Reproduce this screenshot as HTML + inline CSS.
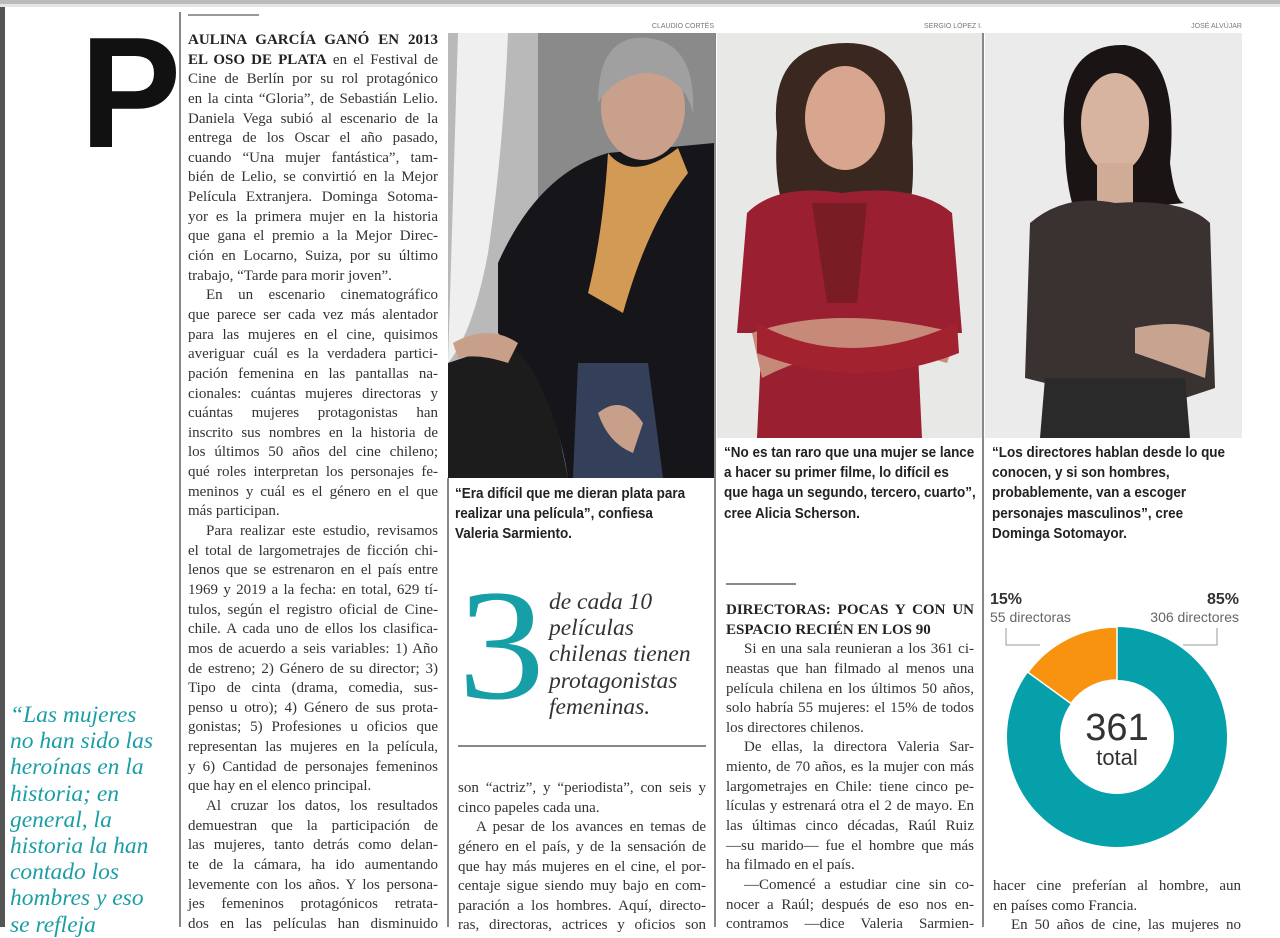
<!DOCTYPE html>
<html><head><meta charset="utf-8"><style>
*{margin:0;padding:0;box-sizing:border-box}
body{width:1280px;height:927px;overflow:hidden;background:#fff;position:relative;font-family:"Liberation Serif",serif;color:#333}
.a{position:absolute}
.col div{height:19.65px;line-height:19.65px;font-size:15px;text-align:justify;text-align-last:justify;white-space:nowrap;overflow:visible}
.col div.l{text-align-last:left}
.col div.i{padding-left:18px}
.cap{font-family:"Liberation Sans",sans-serif;font-weight:bold;font-size:14.5px;line-height:20.2px;color:#222;white-space:nowrap;transform:scaleX(0.93);transform-origin:left top}
.cr{font-family:"Liberation Sans",sans-serif;font-size:7px;color:#777;white-space:nowrap}
.vr{position:absolute;width:2px;background:#888}
.q{color:#1a9ea6;font-style:italic;font-size:23.5px;line-height:26.2px;white-space:nowrap}
</style></head><body>
<div class="a" style="left:0;top:0;width:5px;height:927px;background:#555"></div>
<div class="a" style="left:0;top:0;width:1280px;height:4px;background:#bbb"></div>
<div class="a" style="left:0;top:4px;width:1280px;height:3px;background:#e4e4e4"></div>

<div class="vr" style="left:179px;top:12px;height:915px"></div>
<div class="vr" style="left:447px;top:478px;height:449px;width:1.5px"></div>
<div class="vr" style="left:714px;top:33px;height:894px;width:1.5px"></div>
<div class="vr" style="left:982px;top:33px;height:894px;width:1.5px"></div>
<div class="a" style="left:188px;top:14px;width:71px;height:1.5px;background:#999"></div>

<div class="a" style="left:80px;top:14px;font-family:'Liberation Sans',sans-serif;font-weight:900;font-size:158px;line-height:1;color:#111;transform:scaleX(0.96);transform-origin:left top">P</div>

<div class="a col" style="left:188px;top:31px;width:250px">
<div><b style="color:#222">AULINA GARCÍA GANÓ EN 2013</b></div>
<div><b style="color:#222">EL OSO DE PLATA</b> en el Festival de</div>
<div>Cine de Berlín por su rol protagónico</div>
<div>en la cinta “Gloria”, de Sebastián Lelio.</div>
<div>Daniela Vega subió al escenario de la</div>
<div>entrega de los Oscar el año pasado,</div>
<div>cuando “Una mujer fantástica”, tam-</div>
<div>bién de Lelio, se convirtió en la Mejor</div>
<div>Película Extranjera. Dominga Sotoma-</div>
<div>yor es la primera mujer en la historia</div>
<div>que gana el premio a la Mejor Direc-</div>
<div>ción en Locarno, Suiza, por su último</div>
<div class="l">trabajo, “Tarde para morir joven”.</div>
<div class="i">En un escenario cinematográfico</div>
<div>que parece ser cada vez más alentador</div>
<div>para las mujeres en el cine, quisimos</div>
<div>averiguar cuál es la verdadera partici-</div>
<div>pación femenina en las pantallas na-</div>
<div>cionales: cuántas mujeres directoras y</div>
<div>cuántas mujeres protagonistas han</div>
<div>inscrito sus nombres en la historia de</div>
<div>los últimos 50 años del cine chileno;</div>
<div>qué roles interpretan los personajes fe-</div>
<div>meninos y cuál es el género en el que</div>
<div class="l">más participan.</div>
<div class="i">Para realizar este estudio, revisamos</div>
<div>el total de largometrajes de ficción chi-</div>
<div>lenos que se estrenaron en el país entre</div>
<div>1969 y 2019 a la fecha: en total, 629 tí-</div>
<div>tulos, según el registro oficial de Cine-</div>
<div>chile. A cada uno de ellos los clasifica-</div>
<div>mos de acuerdo a seis variables: 1) Año</div>
<div>de estreno; 2) Género de su director; 3)</div>
<div>Tipo de cinta (drama, comedia, sus-</div>
<div>penso u otro); 4) Género de sus prota-</div>
<div>gonistas; 5) Profesiones u oficios que</div>
<div>representan las mujeres en la película,</div>
<div>y 6) Cantidad de personajes femeninos</div>
<div class="l">que hay en el elenco principal.</div>
<div class="i">Al cruzar los datos, los resultados</div>
<div>demuestran que la participación de</div>
<div>las mujeres, tanto detrás como delan-</div>
<div>te de la cámara, ha ido aumentando</div>
<div>levemente con los años. Y los persona-</div>
<div>jes femeninos protagónicos retrata-</div>
<div>dos en las películas han disminuido</div>
</div>

<div class="a q" style="left:10px;top:702px">“Las mujeres<br>no han sido las<br>heroínas en la<br>historia; en<br>general, la<br>historia la han<br>contado los<br>hombres y eso<br>se refleja</div>

<div class="a cr" style="right:566px;top:23px">CLAUDIO CORTÉS</div>
<div class="a cr" style="right:298px;top:23px">SERGIO LÓPEZ I.</div>
<div class="a cr" style="right:38px;top:23px">JOSÉ ALVÚJAR</div>

<svg class="a" style="left:448px;top:33px" width="266" height="445" viewBox="0 0 266 445">
<rect width="266" height="445" fill="#8a8a8a"/>
<rect x="0" y="0" width="90" height="445" fill="#b9b9b9"/>
<path d="M10 0 L60 0 Q55 120 40 220 Q25 300 0 330 Z" fill="#efefef"/>
<path d="M0 330 L90 300 L120 445 L0 445Z" fill="#1c1c1c"/>
<rect x="95" y="160" width="60" height="140" fill="#6a6a6a"/>
<path d="M50 230 Q90 140 160 120 L266 110 L266 445 L120 445 Q110 380 80 330 Q60 310 50 300Z" fill="#16161a"/>
<path d="M130 330 L200 330 L215 445 L125 445Z" fill="#34405a"/>
<ellipse cx="195" cy="75" rx="42" ry="52" fill="#c9a08c"/>
<path d="M150 70 Q150 0 200 5 Q248 10 245 80 Q235 40 195 40 Q165 45 150 70Z" fill="#a0a0a0"/>
<path d="M160 120 Q185 150 230 115 L240 140 Q200 190 175 280 L140 260 Q155 200 160 120Z" fill="#d39a55"/>
<path d="M5 310 Q40 290 70 310 L60 330 Q30 320 10 325Z" fill="#c8a08a"/>
<path d="M150 380 Q175 360 195 390 L185 420 Q160 410 150 380Z" fill="#c8a08a"/>
</svg>

<svg class="a" style="left:717px;top:33px" width="265" height="405" viewBox="0 0 265 405">
<rect width="265" height="405" fill="#e8e8e6"/>
<path d="M60 100 Q50 10 130 10 Q200 10 195 110 Q200 180 180 200 L80 200 Q55 170 60 100Z" fill="#3a2820"/>
<ellipse cx="128" cy="85" rx="40" ry="52" fill="#d8a58f"/>
<path d="M30 180 Q60 150 125 160 Q200 150 235 180 L245 300 L200 300 L205 405 L40 405 L45 300 L20 300Z" fill="#9a1f30"/>
<path d="M95 170 L150 170 L140 270 L110 270Z" fill="#7a1c24"/>
<path d="M35 300 Q120 270 240 300 L230 330 Q130 300 45 345Z" fill="#c88a78"/>
<path d="M40 290 Q130 340 240 290 L242 320 Q140 360 40 320Z" fill="#a2222f"/>
</svg>

<svg class="a" style="left:985px;top:33px" width="257" height="405" viewBox="0 0 257 405">
<rect width="257" height="405" fill="#ebebeb"/>
<path d="M80 110 Q70 10 140 12 Q195 20 185 130 Q190 170 200 170 L90 180 Q80 150 80 110Z" fill="#1b1414"/>
<ellipse cx="130" cy="90" rx="34" ry="50" fill="#d6b4a0"/>
<rect x="112" y="130" width="36" height="40" fill="#d0ac96"/>
<path d="M45 190 Q80 160 130 170 Q200 165 225 190 L230 355 L200 365 L200 345 L60 350 L40 345 Z" fill="#3a3230"/>
<path d="M60 345 L200 345 L205 405 L55 405Z" fill="#2a2a2a"/>
<path d="M150 295 Q200 285 225 300 L220 345 Q180 330 150 320Z" fill="#c8a490"/>
</svg>

<div class="a cap" style="left:455px;top:484px">“Era difícil que me dieran plata para<br>realizar una película”, confiesa<br>Valeria Sarmiento.</div>
<div class="a cap" style="left:724px;top:443px">“No es tan raro que una mujer se lance<br>a hacer su primer filme, lo difícil es<br>que haga un segundo, tercero, cuarto”,<br>cree Alicia Scherson.</div>
<div class="a cap" style="left:992px;top:443px">“Los directores hablan desde lo que<br>conocen, y si son hombres,<br>probablemente, van a escoger<br>personajes masculinos”, cree<br>Dominga Sotomayor.</div>

<div class="a" style="left:458px;top:567px;font-size:158px;line-height:1;color:#169fa7;font-family:'Liberation Serif',serif;transform:scaleX(1.1);transform-origin:left top">3</div>
<div class="a" style="left:549px;top:589px;font-size:23.5px;line-height:26.2px;font-style:italic;color:#333;white-space:nowrap">de cada 10<br>películas<br>chilenas tienen<br>protagonistas<br>femeninas.</div>
<div class="a" style="left:458px;top:745px;width:248px;height:1.5px;background:#888"></div>

<div class="a col" style="left:458px;top:779px;width:248px">
<div>son “actriz”, y “periodista”, con seis y</div>
<div class="l">cinco papeles cada una.</div>
<div class="i">A pesar de los avances en temas de</div>
<div>género en el país, y de la sensación de</div>
<div>que hay más mujeres en el cine, el por-</div>
<div>centaje sigue siendo muy bajo en com-</div>
<div>paración a los hombres. Aquí, directo-</div>
<div>ras, directoras, actrices y oficios son</div>
</div>

<div class="a" style="left:726px;top:583px;width:70px;height:1.5px;background:#888"></div>
<div class="a col" style="left:726px;top:601px;width:248px">
<div style="font-weight:bold;color:#222">DIRECTORAS: POCAS Y CON UN</div>
<div class="l" style="font-weight:bold;color:#222">ESPACIO RECIÉN EN LOS 90</div>
<div class="i">Si en una sala reunieran a los 361 ci-</div>
<div>neastas que han filmado al menos una</div>
<div>película chilena en los últimos 50 años,</div>
<div>solo habría 55 mujeres: el 15% de todos</div>
<div class="l">los directores chilenos.</div>
<div class="i">De ellas, la directora Valeria Sar-</div>
<div>miento, de 70 años, es la mujer con más</div>
<div>largometrajes en Chile: tiene cinco pe-</div>
<div>lículas y estrenará otra el 2 de mayo. En</div>
<div>las últimas cinco décadas, Raúl Ruiz</div>
<div>—su marido— fue el hombre que más</div>
<div class="l">ha filmado en el país.</div>
<div class="i">—Comencé a estudiar cine sin co-</div>
<div>nocer a Raúl; después de eso nos en-</div>
<div>contramos —dice Valeria Sarmien-</div>
</div>

<svg class="a" style="left:985px;top:580px" width="257" height="280" viewBox="0 0 257 280">
<g font-family="Liberation Sans, sans-serif">
<text x="5" y="24" font-size="16" font-weight="bold" fill="#333">15%</text>
<text x="5" y="42" font-size="14" fill="#666">55 directoras</text>
<text x="254" y="24" font-size="16" font-weight="bold" fill="#333" text-anchor="end">85%</text>
<text x="254" y="42" font-size="14" fill="#666" text-anchor="end">306 directores</text>
</g>
<path d="M21 48 V65 H55" fill="none" stroke="#999" stroke-width="1"/>
<path d="M232 48 V65 H198" fill="none" stroke="#999" stroke-width="1"/>
<circle cx="132" cy="157" r="83.5" fill="none" stroke="#06a0aa" stroke-width="53"/>
<path d="M132 47 L132 100 A57 57 0 0 0 85.9 123.5 L43 92.3 A110 110 0 0 1 132 47Z" fill="#f7930f" stroke="#fff" stroke-width="1.5"/>
<text x="132" y="160" font-family="Liberation Sans, sans-serif" font-size="38" fill="#333" text-anchor="middle">361</text>
<text x="132" y="185" font-family="Liberation Sans, sans-serif" font-size="22" fill="#333" text-anchor="middle">total</text>
</svg>

<div class="a col" style="left:993px;top:877px;width:248px">
<div>hacer cine preferían al hombre, aun</div>
<div class="l">en países como Francia.</div>
<div class="i">En 50 años de cine, las mujeres no</div>
</div>
</body></html>
